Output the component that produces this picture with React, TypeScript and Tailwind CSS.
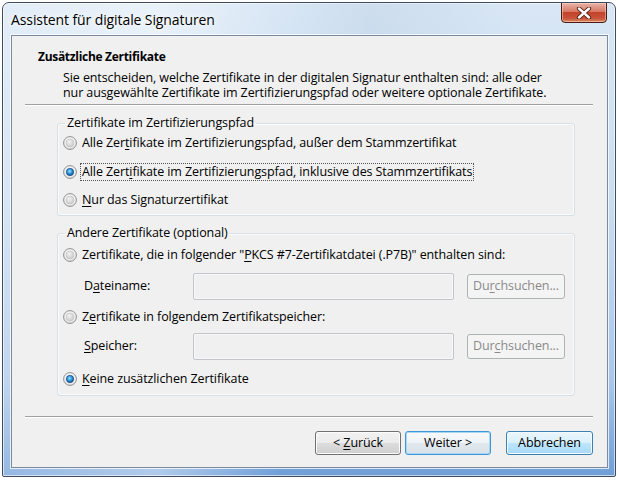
import React from "react";

function Radio({ checked }: { checked?: boolean }) {
  return (
    <svg width="14" height="14" viewBox="0 0 14 14" className="shrink-0">
      <defs>
        <radialGradient id="rbgOuter" cx="50%" cy="40%" r="65%">
          <stop offset="0%" stopColor="#ffffff" />
          <stop offset="70%" stopColor="#ececec" />
          <stop offset="100%" stopColor="#d4d4d4" />
        </radialGradient>
        <radialGradient id="rbgInner" cx="40%" cy="35%" r="70%">
          <stop offset="0%" stopColor="#f2f2f2" />
          <stop offset="100%" stopColor="#c9c9c9" />
        </radialGradient>
        <radialGradient id="rbgDot" cx="45%" cy="40%" r="65%">
          <stop offset="0%" stopColor="#9ee4ff" />
          <stop offset="45%" stopColor="#2f9be0" />
          <stop offset="100%" stopColor="#0b3f7c" />
        </radialGradient>
      </defs>
      <circle cx="7" cy="7" r="6.4" fill="url(#rbgOuter)" stroke="#8e8f8f" strokeWidth="1" />
      {checked ? (
        <circle cx="7" cy="7" r="3.7" fill="url(#rbgDot)" stroke="#15467f" strokeWidth="0.6" />
      ) : (
        <circle cx="7" cy="7" r="3.9" fill="url(#rbgInner)" stroke="#bdbdbd" strokeWidth="0.6" />
      )}
    </svg>
  );
}

function U({ children }: { children: React.ReactNode }) {
  return <span className="underline underline-offset-[2px]">{children}</span>;
}

function RadioRow({
  checked,
  children,
  focused,
  className = "",
}: {
  checked?: boolean;
  children: React.ReactNode;
  focused?: boolean;
  className?: string;
}) {
  return (
    <div className={"flex items-center h-[20px] " + className}>
      <Radio checked={checked} />
      <span
        className={
          "ml-[4px] px-[1px] leading-[16px] whitespace-nowrap " +
          (focused ? "outline outline-1 outline-dotted outline-[#555]" : "")
        }
      >
        {children}
      </span>
    </div>
  );
}

function DisabledField({ label, btn }: { label: React.ReactNode; btn: React.ReactNode }) {
  return (
    <div className="flex items-center h-[27px]">
      <span className="w-[130px] pl-[21px] whitespace-nowrap">{label}</span>
      <div className="w-[261px] h-[27px] rounded-[2px] border border-[#c2c6ca] bg-[#f0f0f0] shadow-[inset_0_0_0_1px_#f7f7f7]" />
      <div className="ml-[13px] w-[98px] h-[25px] rounded-[3px] border border-[#adb2b5] bg-[#f4f4f4] flex items-center justify-center text-[#8a8a8a]">
        <span>{btn}</span>
      </div>
    </div>
  );
}

function Separator({ className = "" }: { className?: string }) {
  return (
    <div className={"ml-[13px] w-[568px] h-[2px] flex flex-col " + className}>
      <div className="h-[1px] bg-[#a0a0a0]" />
      <div className="h-[1px] bg-white" />
    </div>
  );
}

export default function App() {
  return (
    <div className="w-[618px] h-[480px] bg-white p-[2px] font-['Open_Sans',sans-serif] text-[12.5px] tracking-[-0.1px] text-black">
      <div className="w-[614px] h-[475px] rounded-t-[7px] rounded-b-[2px] border border-[#3f4d5e] shadow-[inset_0_0_0_1px_rgba(255,255,255,0.6)] bg-[linear-gradient(180deg,#d9e7f5_0%,#cadef1_40%,#a9c7ea_80%,#6f9fd8_100%)] flex flex-col overflow-hidden relative">
        <div className="absolute inset-0 pointer-events-none bg-[linear-gradient(90deg,rgba(255,255,255,0.25)_0%,rgba(255,255,255,0.45)_25%,rgba(255,255,255,0)_45%,rgba(120,150,190,0.12)_60%,rgba(255,255,255,0)_85%)]" />
        {/* Title bar */}
        <div className="h-[32px] flex items-start justify-between relative">
          <span className="ml-[8px] mt-[6px] text-[14px] tracking-[-0.1px] text-black [text-shadow:0_0_6px_#ffffff,0_0_10px_#ffffff]">
            Assistent für digitale Signaturen
          </span>
          <div className="mr-[8px] mt-[-1px] w-[46px] h-[21px] rounded-b-[4px] border border-[#4a1c14] bg-[linear-gradient(180deg,#e8b3a8_0%,#d77a66_45%,#c2432a_50%,#c7533a_80%,#dd8a62_100%)] shadow-[inset_0_0_0_1px_rgba(255,220,210,0.5)] flex items-center justify-center">
            <svg width="16" height="12" viewBox="0 0 16 12">
              <path d="M3 1.5 L13 10.5 M13 1.5 L3 10.5" stroke="#4a1a12" strokeWidth="4.2" strokeLinecap="round" />
              <path d="M3 1.5 L13 10.5 M13 1.5 L3 10.5" stroke="#ffffff" strokeWidth="2.4" strokeLinecap="round" />
            </svg>
          </div>
        </div>
        {/* Client panel */}
        <div className="relative ml-[8px] mr-[7px] w-[597px] h-[433px] border border-[#7b8a9c] shadow-[0_0_0_1px_rgba(255,255,255,0.75)] bg-[#f0f0f0] flex flex-col">
          <div className="pl-[26px] pt-[13px] font-bold text-[12px] tracking-[-0.3px] leading-[16px]">
            Zusätzliche Zertifikate
          </div>
          <div className="pl-[51px] mt-[5px] leading-[15px]">
            <div>Sie entscheiden, welche Zertifikate in der digitalen Signatur enthalten sind: alle oder</div>
            <div>nur ausgewählte Zertifikate im Zertifizierungspfad oder weitere optionale Zertifikate.</div>
          </div>
          <Separator className="mt-[4px]" />

          <fieldset className="ml-[45px] mt-[9px] w-[518px] h-[101px] border border-[#d5dfe5] rounded-[3px] shadow-[inset_0_0_0_1px_#fafbfc]">
            <legend className="ml-[7px] px-[2px] leading-[16px]">Zertifikate im Zertifizierungspfad</legend>
            <div className="pl-[5px] pt-[2px] flex flex-col gap-[8.5px]">
              <RadioRow>
                Alle Zer<U>t</U>ifikate im Zertifizierungspfad, außer dem Stammzertifikat
              </RadioRow>
              <RadioRow checked focused>
                Alle Zert<U>i</U>fikate im Zertifizierungspfad, inklusive des Stammzertifikats
              </RadioRow>
              <RadioRow>
                <U>N</U>ur das Signaturzertifikat
              </RadioRow>
            </div>
          </fieldset>

          <fieldset className="ml-[45px] mt-[9px] w-[518px] h-[171px] border border-[#d5dfe5] rounded-[3px] shadow-[inset_0_0_0_1px_#fafbfc]">
            <legend className="ml-[7px] px-[2px] leading-[16px]">Andere Zertifikate (optional)</legend>
            <div className="pl-[5px] pt-[4px] flex flex-col">
              <RadioRow>
                Zertifikate, die in folgender "<U>P</U>KCS #7-Zertifikatdatei (.P7B)" enthalten sind:
              </RadioRow>
              <div className="mt-[8px]">
                <DisabledField
                  label={
                    <>
                      D<U>a</U>teiname:
                    </>
                  }
                  btn={
                    <>
                      Du<U>r</U>chsuchen...
                    </>
                  }
                />
              </div>
              <RadioRow className="mt-[7px]">
                Z<U>e</U>rtifikate in folgendem Zertifikatspeicher:
              </RadioRow>
              <div className="mt-[6px]">
                <DisabledField
                  label={
                    <>
                      <U>S</U>peicher:
                    </>
                  }
                  btn={
                    <>
                      Dur<U>c</U>hsuchen...
                    </>
                  }
                />
              </div>
              <RadioRow checked className="mt-[9px]">
                <U>K</U>eine zusätzlichen Zertifikate
              </RadioRow>
            </div>
          </fieldset>

          <Separator className="mt-[20px]" />

          <div className="mt-[13px] flex justify-end pr-[14px]">
            <button className="w-[86px] h-[24px] rounded-[3px] border border-[#707070] bg-[linear-gradient(180deg,#f2f2f2_0%,#ebebeb_50%,#dddddd_50%,#cfcfcf_100%)] shadow-[inset_0_0_0_1px_#fcfcfc] flex items-center justify-center">
              <span>
                &lt; <U>Z</U>urück
              </span>
            </button>
            <button className="ml-[4px] w-[86px] h-[24px] rounded-[3px] border border-[#3c97d8] bg-[linear-gradient(180deg,#f8fafc_0%,#eef3f7_50%,#e2e9ee_50%,#d7e1e8_100%)] shadow-[inset_0_0_0_1px_#a9d6f3] flex items-center justify-center">
              <span>Weiter &gt;</span>
            </button>
            <button className="ml-[15px] w-[87px] h-[24px] rounded-[3px] border border-[#3c7fb1] bg-[linear-gradient(180deg,#eaf6fd_0%,#d9f0fc_50%,#bee6fd_50%,#a7d9f5_100%)] shadow-[inset_0_0_0_1px_#f4fbff] flex items-center justify-center">
              <span>Abbrechen</span>
            </button>
          </div>
        </div>
      </div>
    </div>
  );
}
